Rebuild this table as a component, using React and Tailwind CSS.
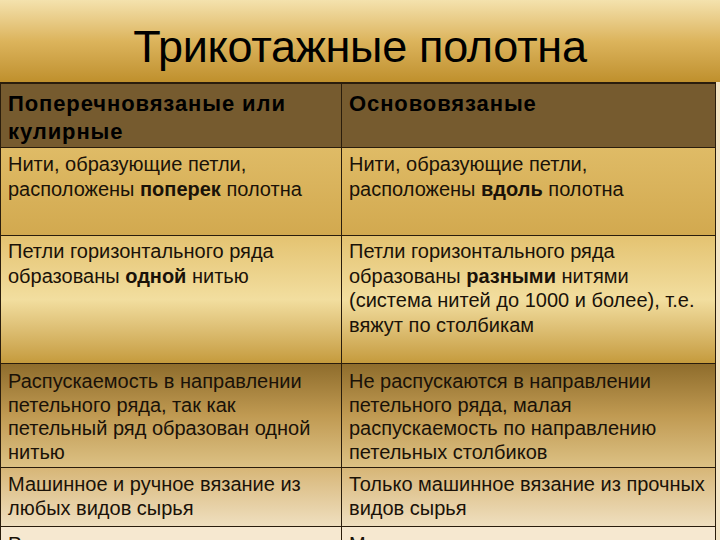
import React from 'react';

const rows = [
  {
    h: 'h-[88px]',
    pt: 'pt-[4px]',
    bg: 'bg-gradient-to-b from-[#dfbb66] to-[#d2a94f]',
    left: (
      <>
        Нити, образующие петли, расположены <b>поперек</b> полотна
      </>
    ),
    right: (
      <>
        Нити, образующие петли, расположены <b>вдоль</b> полотна
      </>
    ),
  },
  {
    h: 'h-[128px]',
    pt: 'pt-[3px]',
    bg: 'bg-gradient-to-b from-[#e4c371] via-[#f2de9f] to-[#c59b3c]',
    left: (
      <>
        Петли горизонтального ряда образованы <b>одной</b> нитью
      </>
    ),
    right: (
      <>
        Петли горизонтального ряда образованы <b>разными</b> нитями (система нитей до 1000 и более), т.е. вяжут по столбикам
      </>
    ),
  },
  {
    h: 'h-[104px]',
    pt: 'pt-[6px]',
    narrow: true,
    bg: 'bg-gradient-to-b from-[#8f6d2c] via-[#c09a52] to-[#dcc184]',
    left: 'Распускаемость в направлении петельного ряда, так как петельный ряд образован одной нитью',
    right: 'Не распускаются в направлении петельного ряда, малая распускаемость по направлению петельных столбиков',
  },
  {
    h: 'h-[59px]',
    pt: 'pt-[5px]',
    narrow: true,
    bg: 'bg-gradient-to-b from-[#d7b677] to-[#efdfbf]',
    left: 'Машинное и ручное вязание из любых видов сырья',
    right: 'Только машинное вязание из прочных видов сырья',
  },
  {
    h: 'h-[40px]',
    pt: 'pt-[5px]',
    bg: 'bg-[#f6e8d0]',
    left: 'Растяжимость',
    right: 'Меньшая растяжимость и',
  },
];

const App = () => {
  return (
    <div className="w-[720px] h-[540px] overflow-hidden bg-[#f3e4c4] text-[#1a1208]" style={{ fontFamily: '"Liberation Sans", Arial, sans-serif' }}>
      <div className="h-[82px] bg-gradient-to-b from-[#f4e2ad] via-[#dcb45c] to-[#bf902c] flex items-center justify-center pt-[10px]">
        <h1 className="text-[45px] leading-none text-black tracking-[-0.3px]">Трикотажные полотна</h1>
      </div>

      <div className="w-[716px] border-t-2 border-l border-r border-[#2a1d0c]">
        <div className="grid grid-cols-[341px_1fr] h-[64px] bg-[#765b2f] border-b border-[#2a1d0c]">
          <div className="border-r border-[#2a1d0c] pl-[7px] pt-[6px] text-[22px] leading-[28px] font-bold tracking-[0.9px] text-black">
            Поперечновязаные или кулирные
          </div>
          <div className="pl-[7px] pt-[6px] text-[22px] leading-[28px] font-bold tracking-[0.9px] text-black">Основовязаные</div>
        </div>

        {rows.map((r, i) => (
          <div key={i} className={`grid grid-cols-[341px_1fr] ${r.h} ${r.bg} border-b border-[#2a1d0c]`}>
            <div className={`border-r border-[#2a1d0c] pl-[7px] pr-1 ${r.pt} text-[20px] ${r.narrow ? 'leading-[23.5px]' : 'leading-[24.5px]'}`}>
              {r.left}
            </div>
            <div className={`pl-[7px] pr-0 ${r.pt} text-[20px] ${r.narrow ? 'leading-[23.5px]' : 'leading-[24.5px]'}`}>{r.right}</div>
          </div>
        ))}
      </div>
    </div>
  );
};

export default App;
